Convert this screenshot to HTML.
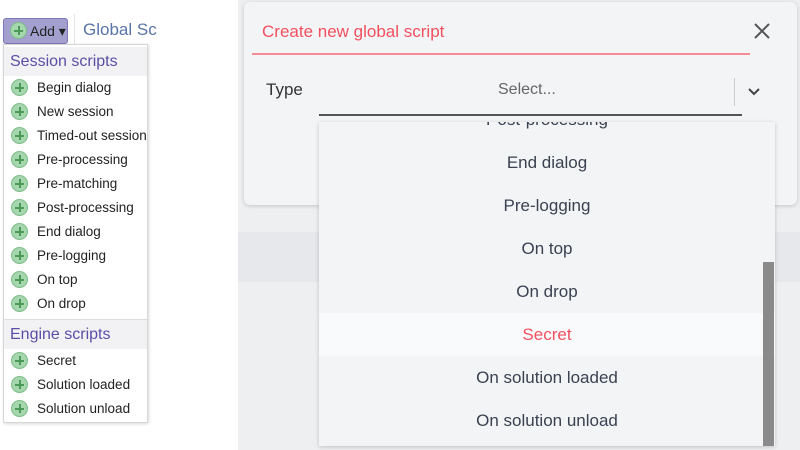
<!DOCTYPE html>
<html><head><style>
*{margin:0;padding:0;box-sizing:border-box}
body{width:800px;height:450px;overflow:hidden;position:relative;background:#fff;font-family:"Liberation Sans",sans-serif}
.left{position:absolute;left:0;top:0;width:238px;height:450px;background:#fff}
.right{position:absolute;left:238px;top:0;width:562px;height:450px;background:#eeeff1}
.strip{position:absolute;left:238px;top:232px;width:562px;height:50px;background:#e7e8eb}
.add{position:absolute;left:3px;top:18px;width:65px;height:26px;background:#a3a0cf;border:1px solid #7d78b8;border-radius:3px;font-size:14px;color:#222;padding:4px 0 0 26px}
.add .ic{left:6px;top:3px}
.gs{position:absolute;left:83px;top:20px;font-size:17px;color:#5a74a8}
.vl{position:absolute;left:74px;top:14px;width:1px;height:30px;background:#e4e4e4}
.menu{position:absolute;left:3px;top:44px;width:145px;height:379px;background:#fff;border:1px solid #d6d6d6;box-shadow:1px 1px 3px rgba(0,0,0,.15)}
.hd{height:29px;background:#f2f2f4;color:#5a4ea6;font-size:16px;padding:6px 0 0 6px;margin-top:2px}
.it{height:24px;position:relative;font-size:13.5px;color:#222;padding:4px 0 0 33px}
.ic{position:absolute;left:7px;top:3px;width:17px;height:17px;border-radius:50%;background:#a6d6ad;border:1px solid #7cbf87}
.ic:before{content:"";position:absolute;left:3px;top:7px;width:9px;height:1.5px;background:#4c9a58}
.ic:after{content:"";position:absolute;left:7px;top:3px;width:1.5px;height:9px;background:#4c9a58}
.sep{border-top:1px solid #ddd;margin-top:3px}
.modal{position:absolute;left:244px;top:2px;width:553px;height:203px;background:#f3f4f6;border-radius:6px;box-shadow:0 1px 4px rgba(0,0,0,.18)}
.title{position:absolute;left:18px;top:20px;font-size:17px;color:#f2505f}
.hr{position:absolute;left:8px;top:51px;width:498px;height:2px;background:#f58c95}
.type{position:absolute;left:22px;top:78px;font-size:17px;color:#333}
.sel{position:absolute;left:254px;top:79px;font-size:16px;color:#666}
.selline{position:absolute;left:75px;top:112px;width:423px;height:1.5px;background:#555}
.vsep{position:absolute;left:490px;top:76px;width:1px;height:28px;background:#ccc}
.dd{position:absolute;left:319px;top:122px;width:456px;height:324px;background:#f3f4f6;box-shadow:0 1px 4px rgba(0,0,0,.2);overflow:hidden}
.o{height:43px;text-align:center;font-size:17px;color:#3a4150;line-height:43px}
.sb{position:absolute;left:444px;top:140px;width:11px;height:184px;background:#8a8a8a}
</style></head><body>
<div class="left"></div>
<div class="right"></div><div class="strip"></div>
<div style="position:absolute;left:740px;top:298px;font-size:17px;color:#c8c8c8">go</div>
<div class="add"><span class="ic"></span>Add ▾</div>
<div class="vl"></div>
<div class="gs">Global Sc</div>
<div class="menu">
<div class="hd">Session scripts</div>
<div class="it"><span class="ic"></span>Begin dialog</div>
<div class="it"><span class="ic"></span>New session</div>
<div class="it"><span class="ic"></span>Timed-out session</div>
<div class="it"><span class="ic"></span>Pre-processing</div>
<div class="it"><span class="ic"></span>Pre-matching</div>
<div class="it"><span class="ic"></span>Post-processing</div>
<div class="it"><span class="ic"></span>End dialog</div>
<div class="it"><span class="ic"></span>Pre-logging</div>
<div class="it"><span class="ic"></span>On top</div>
<div class="it"><span class="ic"></span>On drop</div>
<div class="sep"></div>
<div class="hd" style="margin-top:0">Engine scripts</div>
<div class="it"><span class="ic"></span>Secret</div>
<div class="it"><span class="ic"></span>Solution loaded</div>
<div class="it"><span class="ic"></span>Solution unload</div>
</div>
<div class="modal">
<div class="title">Create new global script</div>
<svg style="position:absolute;left:510px;top:21px" width="16" height="16"><path d="M1 1 L15 15 M15 1 L1 15" stroke="#555" stroke-width="2" fill="none"/></svg>
<div class="hr"></div>
<div class="type">Type</div>
<div class="sel">Select...</div>
<div class="vsep"></div>
<svg style="position:absolute;left:503px;top:85px" width="14" height="10"><path d="M2 2 L7 7 L12 2" stroke="#444" stroke-width="2" fill="none"/></svg>
<div class="selline"></div>
</div>
<div class="dd">
<div class="o" style="margin-top:-24px">Post-processing</div>
<div class="o">End dialog</div>
<div class="o">Pre-logging</div>
<div class="o">On top</div>
<div class="o">On drop</div>
<div class="o" style="background:#f9fafb;color:#f2505f">Secret</div>
<div class="o">On solution loaded</div>
<div class="o">On solution unload</div>
<div class="sb"></div>
</div>
</body></html>
